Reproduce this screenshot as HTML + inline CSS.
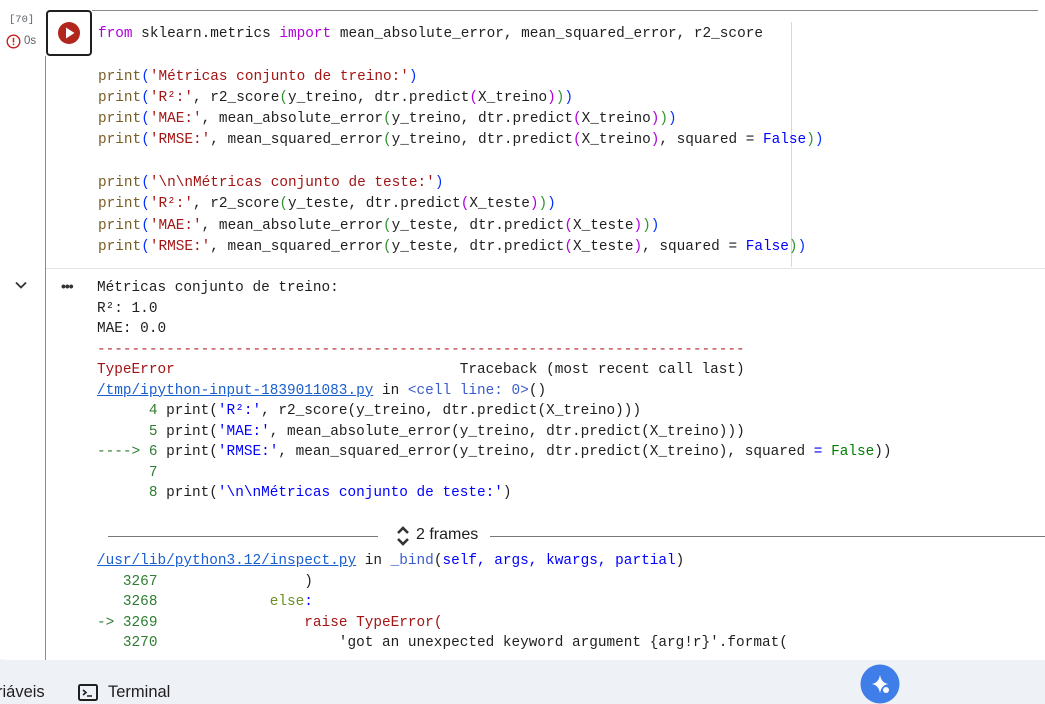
<!DOCTYPE html>
<html><head><meta charset="utf-8"><style>
*{margin:0;padding:0;box-sizing:border-box}
body{width:1045px;height:702px;overflow:hidden;background:#eef1f6;font-family:"Liberation Sans",sans-serif;position:relative}
.panel{position:absolute;left:-20px;top:0;width:1080px;height:660px;background:#fff;border-radius:0 0 0 28px}
.m{font-family:"Liberation Mono",monospace;font-size:14.4px;white-space:normal;position:absolute;color:#1f1f1f}
.m div{white-space:pre}
.code div{height:21.3px;line-height:21.3px}
.out div{height:20.5px;line-height:20.5px}
.pr{color:#795e26}.s{color:#a31515}.kw{color:#af00db}.b{color:#0431fa}.g{color:#319331}.f{color:#0000ff}
.red{color:#b22b31}.dr{color:#a31515}.ln{color:#2e7d32}.lk{color:#1a5fd0;text-decoration:underline}.bl{color:#0000ff}.gr{color:#008000}.ob{color:#3b5ccf}
</style></head><body>
<div class="panel"></div>
<div style="position:absolute;left:92px;top:10px;width:946px;height:1px;background:#8a8a8a"></div>
<div style="position:absolute;left:791px;top:22px;width:1px;height:245px;background:#d8d8d8"></div>
<div style="position:absolute;left:45px;top:268px;width:1000px;height:1px;background:#e3e3e3"></div>
<div style="position:absolute;left:45px;top:56px;width:1px;height:604px;background:#8a8a8a"></div>
<div style="position:absolute;left:46px;top:10px;width:46px;height:46px;border:2px solid #1f1f1f;border-radius:4px;background:#fff"></div>
<svg style="position:absolute;left:57px;top:21px" width="24" height="24" viewBox="0 0 24 24"><circle cx="12" cy="12" r="11" fill="#b3261e"/><path d="M9 6.5v11l8.5-5.5z" fill="#fff"/></svg>
<div class="m" style="left:9px;top:14px;font-size:10.5px;color:#5f6368"><div>[70]</div></div>
<svg style="position:absolute;left:6px;top:34px" width="15" height="15" viewBox="0 0 16 16"><circle cx="8" cy="8" r="6.7" fill="none" stroke="#c5221f" stroke-width="1.5"/><rect x="7.2" y="4" width="1.6" height="5" fill="#c5221f"/><rect x="7.2" y="10.3" width="1.6" height="1.6" fill="#c5221f"/></svg>
<div style="position:absolute;left:24px;top:35px;font-size:11.5px;color:#5f6368">0s</div>
<div class="m code" style="left:98px;top:24px"><div><span class="kw">from</span> sklearn.metrics <span class="kw">import</span> mean_absolute_error, mean_squared_error, r2_score</div><div> </div><div><span class="pr">print</span><span class="b">(</span><span class="s">'Métricas conjunto de treino:'</span><span class="b">)</span></div><div><span class="pr">print</span><span class="b">(</span><span class="s">'R²:'</span>, r2_score<span class="g">(</span>y_treino, dtr.predict<span class="kw">(</span>X_treino<span class="kw">)</span><span class="g">)</span><span class="b">)</span></div><div><span class="pr">print</span><span class="b">(</span><span class="s">'MAE:'</span>, mean_absolute_error<span class="g">(</span>y_treino, dtr.predict<span class="kw">(</span>X_treino<span class="kw">)</span><span class="g">)</span><span class="b">)</span></div><div><span class="pr">print</span><span class="b">(</span><span class="s">'RMSE:'</span>, mean_squared_error<span class="g">(</span>y_treino, dtr.predict<span class="kw">(</span>X_treino<span class="kw">)</span>, squared = <span class="f">False</span><span class="g">)</span><span class="b">)</span></div><div> </div><div><span class="pr">print</span><span class="b">(</span><span class="s">'\n\nMétricas conjunto de teste:'</span><span class="b">)</span></div><div><span class="pr">print</span><span class="b">(</span><span class="s">'R²:'</span>, r2_score<span class="g">(</span>y_teste, dtr.predict<span class="kw">(</span>X_teste<span class="kw">)</span><span class="g">)</span><span class="b">)</span></div><div><span class="pr">print</span><span class="b">(</span><span class="s">'MAE:'</span>, mean_absolute_error<span class="g">(</span>y_teste, dtr.predict<span class="kw">(</span>X_teste<span class="kw">)</span><span class="g">)</span><span class="b">)</span></div><div><span class="pr">print</span><span class="b">(</span><span class="s">'RMSE:'</span>, mean_squared_error<span class="g">(</span>y_teste, dtr.predict<span class="kw">(</span>X_teste<span class="kw">)</span>, squared = <span class="f">False</span><span class="g">)</span><span class="b">)</span></div></div>
<svg style="position:absolute;left:14px;top:280px" width="14" height="10" viewBox="0 0 14 10"><path d="M2 2.5l5 5 5-5" fill="none" stroke="#333" stroke-width="1.8"/></svg>
<div style="position:absolute;left:61px;top:278px;font-size:14px;font-weight:bold;color:#333;letter-spacing:-1px">•••</div>
<div class="m out" style="left:97px;top:278px"><div>Métricas conjunto de treino:</div><div>R²: 1.0</div><div>MAE: 0.0</div><div class="red">---------------------------------------------------------------------------</div><div><span class="dr">TypeError</span>                                 Traceback (most recent call last)</div><div><span class="lk">/tmp/ipython-input-1839011083.py</span> in <span class="ob">&lt;cell line: 0&gt;</span>()</div><div><span class="ln">      4 </span>print(<span class="bl">'R²:'</span>, r2_score(y_treino, dtr.predict(X_treino)))</div><div><span class="ln">      5 </span>print(<span class="bl">'MAE:'</span>, mean_absolute_error(y_treino, dtr.predict(X_treino)))</div><div><span class="ln">----&gt; 6 </span>print(<span class="bl">'RMSE:'</span>, mean_squared_error(y_treino, dtr.predict(X_treino), squared <span class="bl">=</span> <span class="gr">False</span>))</div><div><span class="ln">      7</span></div><div><span class="ln">      8 </span>print(<span class="bl">'\n\nMétricas conjunto de teste:'</span>)</div></div>
<div style="position:absolute;left:108px;top:536px;width:270px;height:1px;background:#777"></div>
<div style="position:absolute;left:490px;top:536px;width:555px;height:1px;background:#777"></div>
<svg style="position:absolute;left:395px;top:525px" width="16" height="22" viewBox="0 0 16 22"><path d="M3 8l5-5 5 5M3 14l5 5 5-5" fill="none" stroke="#333" stroke-width="2.6"/></svg>
<div style="position:absolute;left:416px;top:526px;font-size:16px;color:#1f1f1f">2 frames</div>
<div class="m out" style="left:97px;top:551px"><div><span class="lk">/usr/lib/python3.12/inspect.py</span> in <span class="ob">_bind</span>(<span class="bl">self, args, kwargs, partial</span>)</div><div><span class="ln">   3267 </span>                )</div><div><span class="ln">   3268 </span>            <span style="color:#6b8e23">else</span><span class="bl">:</span></div><div><span class="ln">-&gt; 3269 </span>                <span class="dr">raise TypeError(</span></div><div><span class="ln">   3270 </span>                    'got an unexpected keyword argument {arg!r}'.format(</div></div>
<div style="position:absolute;left:0;top:660px;width:1045px;height:42px;background:#eef1f6"></div>
<div style="position:absolute;left:-3px;top:683px;font-size:16.5px;color:#1f1f1f">riáveis</div>
<svg style="position:absolute;left:78px;top:684px" width="20" height="17" viewBox="0 0 20 17"><rect x="1" y="1" width="18" height="15" rx="1.5" fill="none" stroke="#1f1f1f" stroke-width="2"/><path d="M5 6l3 2.5-3 2.5M9 12h5" fill="none" stroke="#1f1f1f" stroke-width="1.6"/></svg>
<div style="position:absolute;left:108px;top:683px;font-size:16.5px;color:#1f1f1f">Terminal</div>
<svg style="position:absolute;left:860px;top:664px" width="40" height="40" viewBox="0 0 40 40"><circle cx="20" cy="20" r="19.5" fill="#3f7ee8"/><path d="M20 11c1 5 3 8 8 9-5 1-7 4-8 9-1-5-3-8-8-9 5-1 7-4 8-9z" fill="#fff"/><circle cx="26" cy="26" r="3" fill="#fff"/></svg>
</body></html>
